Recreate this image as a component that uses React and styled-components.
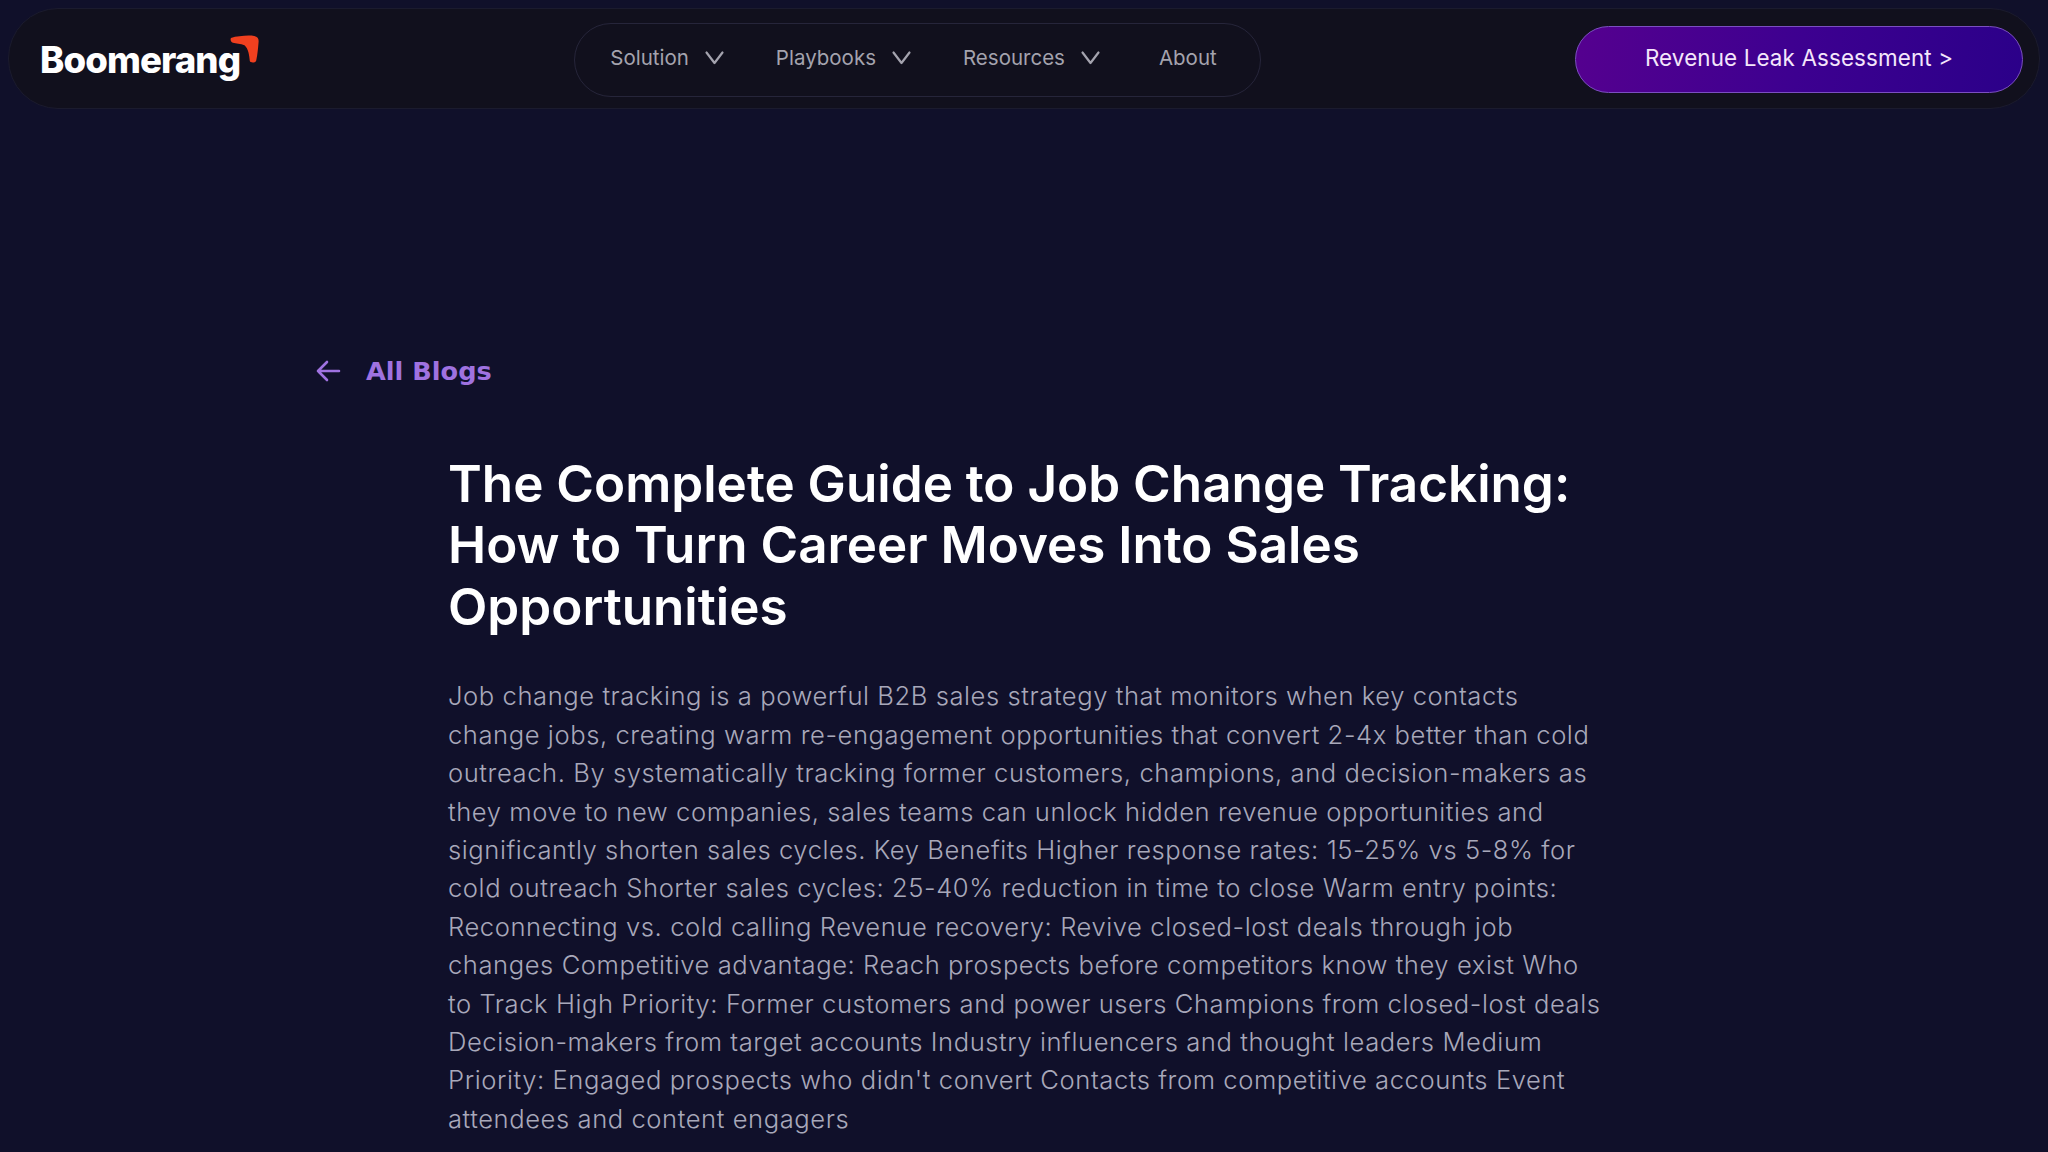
import React from "react";
import styled, { createGlobalStyle } from "styled-components";

const GlobalStyle = createGlobalStyle`
  html, body {
    margin: 0;
    padding: 0;
    height: 1152px;
    overflow: hidden;
    background: #10102a;
    font-family: "Inter", "Liberation Sans", sans-serif;
  }
`;

const Page = styled.div`
  width: 2048px;
  height: 1152px;
  padding: 8px 8px 0;
  box-sizing: border-box;
  overflow: hidden;
`;

const Nav = styled.nav`
  display: flex;
  align-items: center;
  justify-content: space-between;
  height: 101px;
  box-sizing: border-box;
  padding: 2px 16px 0 31px;
  background: #11101d;
  border: 1px solid #1b1b2e;
  border-radius: 50px;
`;

const Logo = styled.a`
  position: relative;
  display: block;
  width: 220px;
  font-size: 36.6px;
  font-weight: 800;
  letter-spacing: -0.9px;
  line-height: 44px;
  color: #fff;
`;

const LogoMark = styled.svg`
  position: absolute;
  left: 190px;
  top: -3px;
  width: 29px;
  height: 29px;
`;

const Menu = styled.ul`
  display: flex;
  align-items: center;
  gap: 50px;
  margin: 0;
  padding: 0 43px 5px 35px;
  height: 74px;
  box-sizing: border-box;
  list-style: none;
  border: 1px solid #26253a;
  border-radius: 37px;
`;

const MenuItem = styled.li`
  display: flex;
  align-items: center;
  gap: 14px;
  font-size: 20.5px;
  color: #a4a3ae;
  margin-left: ${(p) => (p.$plain ? "7px" : "0")};
`;

const Chevron = styled.svg`
  width: 23px;
  height: 24px;
  margin-top: 2px;
  fill: none;
  stroke: #a4a3ae;
  stroke-width: 2.2;
  stroke-linecap: round;
  stroke-linejoin: round;
`;

const Cta = styled.a`
  display: flex;
  align-items: center;
  justify-content: center;
  width: 448px;
  height: 67px;
  box-sizing: border-box;
  padding-bottom: 4px;
  font-size: 22.4px;
  font-weight: 400;
  letter-spacing: 0.13px;
  color: #f4e6fb;
  border: 1.5px solid #7b4fc0;
  border-radius: 34px;
  background: linear-gradient(100deg, #55008f 0%, #3d0090 50%, #2b0089 100%);
`;

const Main = styled.main`
  display: flex;
  flex-direction: column;
`;

const BackLink = styled.a`
  display: flex;
  align-items: center;
  gap: 24px;
  margin: 245px 0 0 306px;
  font-family: "DejaVu Sans", sans-serif;
  font-size: 25.6px;
  font-weight: 700;
  line-height: 34px;
  color: #9f72e0;
`;

const BackIcon = styled.svg`
  width: 28px;
  height: 28px;
  fill: none;
  stroke: #9f72e0;
  stroke-width: 2.6;
  stroke-linecap: round;
  stroke-linejoin: round;
`;

const Article = styled.article`
  width: 1153px;
  margin: 65px 0 0 440px;
`;

const Title = styled.h1`
  margin: 0;
  font-size: 51.2px;
  font-weight: 600;
  line-height: 61.44px;
  color: #fff;
`;

const Body = styled.p`
  margin: 40px 0 0;
  font-size: 25.6px;
  font-weight: 300;
  line-height: 38.4px;
  letter-spacing: 0.56px;
  color: #a8a8ba;
`;

const App = () => {
  return (
    <Page>
      <GlobalStyle />
      <Nav>
        <Logo>
          Boomerang
          <LogoMark viewBox="0 0 30 30">
            <path
              d="M1 3 C8 1 19 0 25 1 C29 2 30 4 29.5 8 C29 15 28 23 27 27 C26 29 21 29 20.5 27 C20 21 19 14 15 10.5 C11 9 6 9 3 8 C1 7.5 0 5 1 3 Z"
              fill="#f0401f"
            />
          </LogoMark>
        </Logo>
        <Menu>
          {["Solution", "Playbooks", "Resources"].map((item) => (
            <MenuItem key={item}>
              {item}
              <Chevron viewBox="0 0 23 24">
                <path d="M3.5 6.5L11.5 17l8-10.5" />
              </Chevron>
            </MenuItem>
          ))}
          <MenuItem $plain>About</MenuItem>
        </Menu>
        <Cta>Revenue Leak Assessment &gt;</Cta>
      </Nav>
      <Main>
        <BackLink>
          <BackIcon viewBox="0 0 28 28">
            <path d="M25 14H4M13 5l-9 9 9 9" />
          </BackIcon>
          All Blogs
        </BackLink>
        <Article>
          <Title>
            The Complete Guide to Job Change Tracking: How to Turn Career Moves Into Sales Opportunities
          </Title>
          <Body>
            Job change tracking is a powerful B2B sales strategy that monitors when key contacts change jobs, creating warm re-engagement opportunities that convert 2-4x better than cold outreach. By systematically tracking former customers, champions, and decision-makers as they move to new companies, sales teams can unlock hidden revenue opportunities and significantly shorten sales cycles. Key Benefits Higher response rates: 15-25% vs 5-8% for cold outreach Shorter sales cycles: 25-40% reduction in time to close Warm entry points: Reconnecting vs. cold calling Revenue recovery: Revive closed-lost deals through job changes Competitive advantage: Reach prospects before competitors know they exist Who to Track High Priority: Former customers and power users Champions from closed-lost deals Decision-makers from target accounts Industry influencers and thought leaders Medium Priority: Engaged prospects who didn't convert Contacts from competitive accounts Event attendees and content engagers
          </Body>
        </Article>
      </Main>
    </Page>
  );
};

export default App;
